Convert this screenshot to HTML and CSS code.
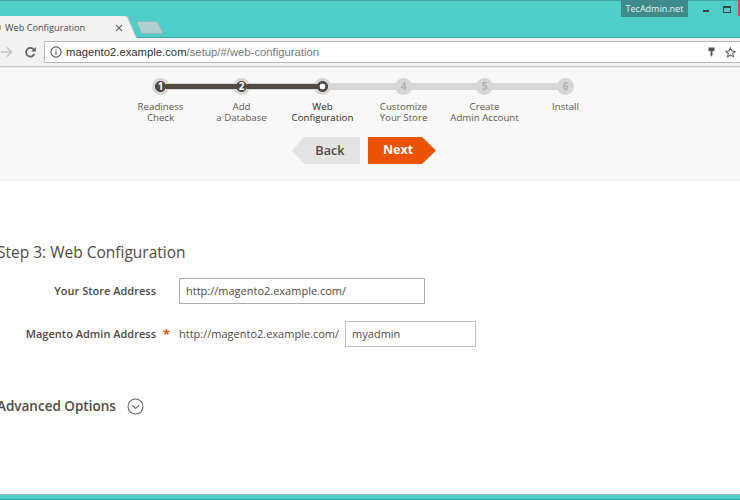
FILE: index.html
```html
<!DOCTYPE html>
<html lang="en">
<head>
<meta charset="utf-8">
<title>Web Configuration</title>
<link rel="stylesheet" href="styles.css">
</head>
<body>
<div class="window">
  <header class="titlebar">
    <div class="tabstrip">
      <div class="tab">
        <span class="favicon"></span>
        <span class="tab-title">Web Configuration</span>
        <svg class="tab-close" width="8" height="8" viewBox="0 0 8 8"><path d="M1 1l6 6M7 1L1 7" stroke="#6a6a6a" stroke-width="1.1" fill="none"/></svg>
        <svg class="tab-curve" width="14" height="22" viewBox="0 0 14 22"><path d="M0 0H.5C2 0 2.600 .8 3.200 2.200L11.500 21V22H0Z" fill="#f2f2f2"/><path d="M.5 0C2 0 2.600 .8 3.200 2.200L11.500 21.500" fill="none" stroke="#a5bdbd"/></svg>
      </div>
      <svg class="newtab" width="28" height="13" viewBox="0 0 28 13"><path d="M1 1.500C1 .8 1.400 .5 2 .5H20C21 .5 21.500 1 22 2L26.500 11C27 12 26.500 12.500 25.500 12.500H7C6 12.500 5.500 12 5 11Z" fill="#b1cfd0" stroke="#8fb9ba"/></svg>
    </div>
    <div class="wincontrols">
      <span class="brand">TecAdmin.net</span>
      <span class="win-min"></span>
      <span class="win-max"></span>
      <span class="win-close"></span>
    </div>
  </header>
  <nav class="toolbar">
    <svg class="nav-forward" width="12" height="12" viewBox="0 0 12 12"><path d="M0 6h10M6 1.500L10.500 6 6 10.500" stroke="#c4c4c4" stroke-width="1.600" fill="none"/></svg>
    <svg class="nav-reload" width="13" height="13" viewBox="0 0 14 14"><path d="M11.300 8.500A4.700 4.700 0 1 1 10.400 3.600" stroke="#5c5c5c" stroke-width="1.800" fill="none"/><path d="M12.800 1v5h-5z" fill="#5c5c5c"/></svg>
    <div class="omnibox">
      <svg class="info" width="12" height="12" viewBox="0 0 13 13"><circle cx="6.500" cy="6.500" r="5.500" fill="none" stroke="#555" stroke-width="1.200"/><path d="M6.500 5.600v4M6.500 3.300v1.200" stroke="#555" stroke-width="1.300"/></svg>
      <span class="url"><span class="url-host">magento2.example.com</span>/setup/#/web-configuration</span>
      <svg class="key" width="7" height="10" viewBox="0 0 7 10"><path d="M.5 .5h6v3.500H4.500V8L3.500 9.800 2.500 8V4H.5z" fill="#555"/></svg>
      <svg class="star" width="11" height="11" viewBox="0 0 13 13"><path d="M6.500 1l1.600 3.700 4 .4-3 2.600.9 3.900-3.500-2.100-3.500 2.100.9-3.900-3-2.600 4-.4z" fill="none" stroke="#555" stroke-width="1.200"/></svg>
    </div>
  </nav>
  <main class="page">
    <section class="wizard">
      <ol class="steps">
        <li class="step done"><span class="node">1</span><span class="label">Readiness<br>Check</span></li>
        <li class="step done"><span class="node">2</span><span class="label">Add<br>a Database</span></li>
        <li class="step current"><span class="node"></span><span class="label">Web<br>Configuration</span></li>
        <li class="step"><span class="node">4</span><span class="label">Customize<br>Your Store</span></li>
        <li class="step"><span class="node">5</span><span class="label">Create<br>Admin Account</span></li>
        <li class="step"><span class="node">6</span><span class="label">Install</span></li>
      </ol>
      <div class="actions">
        <button class="btn-back" type="button">Back</button>
        <button class="btn-next" type="button">Next</button>
      </div>
    </section>
    <section class="content">
      <h2 class="title">Step 3: Web Configuration</h2>
      <div class="row row-store">
        <label class="field-label">Your Store Address</label>
        <input class="input input-store" value="http://magento2.example.com/">
      </div>
      <div class="row row-admin">
        <label class="field-label">Magento Admin Address</label>
        <span class="req">*</span>
        <span class="prefix">http://magento2.example.com/</span>
        <input class="input input-admin" value="myadmin">
      </div>
      <div class="advanced">
        <span class="adv-title">Advanced Options</span>
        <svg class="adv-icon" width="17" height="17" viewBox="0 0 17 17"><circle cx="8.500" cy="8.500" r="7.500" fill="none" stroke="#666" stroke-width="1.100"/><path d="M4.800 7.200l3.700 3.300 3.700-3.300" fill="none" stroke="#666" stroke-width="1.100"/></svg>
      </div>
    </section>
  </main>
  <footer class="bottombar"></footer>
</div>
</body>
</html>
```
FILE: styles.css
```css
* { box-sizing: border-box; }
html, body { margin: 0; padding: 0; }
body { font-family: "Open Sans", "Noto Sans", sans-serif; background: #fff; color: #41362f; }
.window { width: 740px; height: 500px; overflow: hidden; display: flex; flex-direction: column; }

.titlebar { height: 38px; background: #4ecdc9; border-top: 1px solid #3fa5a3; border-bottom: 1px solid #3fa5a3; display: flex; justify-content: space-between; flex: none; }
.tabstrip { display: flex; align-items: flex-start; padding-top: 15px; }
.tab { position: relative; width: 125px; height: 22px; background: #f2f2f2; display: flex; align-items: center; justify-content: space-between; padding: 0 2px 0 0; }
.favicon { position: absolute; left: 0; top: 9px; width: 1px; height: 5px; background: #e9a07a; }
.tab-title { font-size: 9.200px; color: #4a4a4a; margin-left: 5px; }
.tab-close { flex: none; margin-top: 1px; }
.tab-curve { position: absolute; left: 125px; top: 0; }
.newtab { margin: 5px 0 0 11px; }

.wincontrols { display: flex; align-items: flex-start; margin-top: -1px; }
.brand { width: 67px; height: 17px; background: #3f8b8a; color: #e4f1f1; font-size: 9px; line-height: 17px; text-align: center; margin-right: 15px; }
.win-min { width: 6px; height: 2px; background: #33484a; margin: 10px 14px 0 0; }
.win-max { width: 8px; height: 7px; border: 1px solid #33484a; border-top-width: 2px; margin: 6px 7px 0 0; }
.win-close { width: 2px; height: 16px; background: #c9504e; }

.toolbar { height: 29px; background: #f2f2f2; border-bottom: 1px solid #c8c8c8; display: flex; align-items: center; padding-left: 1px; flex: none; }
.nav-forward { margin-right: 11px; }
.nav-reload { margin-right: 7px; }
.omnibox { flex: 1; height: 22px; background: #fff; border: 1px solid #b9b9b9; border-right: 0; border-radius: 2px 0 0 2px; display: flex; align-items: center; padding: 0 4px 0 5px; }
.info { margin-right: 5px; flex: none; }
.url { flex: 1; font-family: "Liberation Sans", sans-serif; font-size: 11.300px; color: #777; margin-left: -1px; }
.url-host { color: #333; }
.key { margin-right: 10px; }
.star { flex: none; }

.page { flex: 1; background: #fff; min-height: 0; }
.wizard { height: 114px; background: #f8f8f8; border-top: 1px solid #e4e4e4; border-bottom: 1px solid #ececec; padding-top: 10px; }
.steps { list-style: none; margin: 0 0 0 120px; padding: 0; display: grid; grid-template-columns: repeat(6, 81px); height: 51px; }
.step { position: relative; display: flex; flex-direction: column; align-items: center; font-size: 9.700px; line-height: 11px; color: #5f574f; }
.step + .step::before { content: ""; position: absolute; left: -40px; top: 5px; width: 81px; height: 7px; background: #d6d6d6; }
.step.done + .step::after { content: ""; position: absolute; z-index: 2; left: -35px; top: 6px; width: 71px; height: 5px; background: #514943; }
.node { position: relative; z-index: 1; width: 17px; height: 17px; border-radius: 50%; background: #d6d6d6; color: #b0b0b0; font-size: 10px; font-weight: 700; line-height: 17px; text-align: center; margin-bottom: 6px; }
.done .node { color: #fff; background: radial-gradient(circle, #514943 0 5.200px, #d6d6d6 5.700px); }
.current .node { background: radial-gradient(circle, #fff 0 2.700px, #514943 3.200px 5.200px, #d6d6d6 5.700px); }
.current .label { color: #2f2823; }
.label { text-align: center; white-space: nowrap; }

.actions { display: flex; justify-content: flex-start; margin: 8px 0 0 292px; gap: 8px; }
.btn-back, .btn-next { height: 27px; border: 0; padding: 0 0 2px; font-family: inherit; font-size: 12.700px; font-weight: 600; }
.btn-back { width: 68px; color: #514943; background: #e3e3e3; clip-path: polygon(12px 0, 100% 0, 100% 100%, 12px 100%, 0 50%); padding-left: 8px; }
.btn-next { width: 68px; color: #fff; background: #eb5202; font-size: 12.500px; font-weight: 700; clip-path: polygon(0 0, 54px 0, 100% 50%, 54px 100%, 0 100%); padding-right: 8px; }

.content { color: #514943; }
.title { margin: 61px 0 0 -3px; font-size: 15.500px; font-weight: 400; line-height: 20px; color: #514943; }
.row { display: flex; align-items: center; }
.row-store { margin-top: 16px; }
.row-admin { margin-top: 17px; }
.field-label { width: 156px; text-align: right; font-size: 11px; font-weight: 600; color: #514943; flex: none; padding-bottom: 2px; }
.req { width: 21px; flex: none; color: #eb5202; font-size: 13px; font-weight: 700; text-align: center; margin-right: 2px; }
.row-store .input-store { margin-left: 23px; }
.prefix { font-size: 11px; color: #514943; white-space: nowrap; padding-bottom: 2px; }
.input { height: 26px; border: 1px solid #adadad; padding: 0 6px 2px; font-family: inherit; font-size: 11px; color: #514943; background: #fff; border-radius: 0; }
.input-store { width: 246px; }
.input-admin { width: 131px; margin-left: 6px; border-color: #c2c2c2; }
.advanced { display: flex; align-items: center; margin: 49px 0 0 -3px; }
.adv-title { font-size: 13.500px; font-weight: 600; color: #514943; }
.adv-icon { margin-left: 11px; margin-top: 2px; }

.bottombar { height: 6px; flex: none; background: #4ecdc9; border-top: 1px solid #9fb3b5; border-bottom: 1px solid #36a5a0; }
```
